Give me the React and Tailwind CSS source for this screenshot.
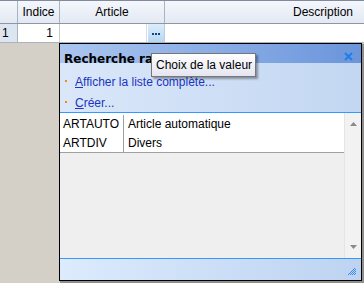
import React from "react";

export default function App() {
  return (
    <div className="relative w-[364px] h-[283px] overflow-hidden bg-[#d4d0c8] font-['Liberation_Sans',Arial,sans-serif] text-[12px] text-black leading-none">
      {/* Header row */}
      <div className="flex h-[24px] border-t border-b border-t-[#7f8a9a] border-b-[#8e96a3] bg-gradient-to-b from-[#f4f7fc] to-[#e3e9f3]">
        <div className="w-[18px] shrink-0 border-r border-[#a9b3c1]" />
        <div className="w-[42px] shrink-0 border-r border-[#a9b3c1] flex items-center justify-center">Indice</div>
        <div className="w-[105px] shrink-0 border-r border-[#a9b3c1] flex items-center justify-center">Article</div>
        <div className="flex-1 flex items-center justify-end pr-[11px]">Description</div>
      </div>
      {/* Data row */}
      <div className="flex h-[19px] border-b border-[#a9b3c1]">
        <div className="w-[18px] shrink-0 border-r border-[#a9b3c1] bg-[#dde5f1] flex items-center pl-[2px]">1</div>
        <div className="w-[42px] shrink-0 border-r border-[#c6ccd5] bg-white flex items-center justify-end pr-[6px]">1</div>
        <div className="w-[105px] shrink-0 border-r border-[#c6ccd5] bg-white flex justify-end items-stretch">
          <div className="w-[1px] bg-[#d6dce4] mr-[1px]" />
          <div className="w-[16px] bg-gradient-to-b from-[#dcedfb] to-[#b5d8f4] flex items-center justify-center pt-[2px]">
            <div className="flex gap-[1px]">
              <div className="w-[2px] h-[2px] bg-[#1f3f7a]" />
              <div className="w-[2px] h-[2px] bg-[#1f3f7a]" />
              <div className="w-[2px] h-[2px] bg-[#1f3f7a]" />
            </div>
          </div>
        </div>
        <div className="flex-1 bg-white" />
      </div>

      {/* Popup */}
      <div className="absolute left-[59px] top-[43px] w-[303px] h-[238px] border border-black flex flex-col bg-[#f0f0f0] shadow-[2px_2px_0_1px_rgba(90,90,90,0.55)]">
        <div className="h-[19px] shrink-0 bg-gradient-to-r from-[#abc6ef] to-[#6b95db] flex items-start pl-[4px] pr-[8px] justify-between">
          <span className="font-bold text-[12px] font-['DejaVu_Sans',sans-serif] mt-[9px]">Recherche rapide</span>
          <svg width="9" height="9" viewBox="0 0 9 9" className="mt-[8px]">
            <path d="M1 1 L8 8 M8 1 L1 8" stroke="#1f7ee9" strokeWidth="1.8" />
          </svg>
        </div>
        <div className="relative h-[50px] shrink-0 border-b border-[#3399ff] bg-gradient-to-r from-[#dae7f9] to-[#c3d7f2] flex flex-col pt-[13px] pl-[5px] gap-[9px]">
          <div className="flex items-center">
            <div className="w-[2px] h-[2px] bg-[#f08a1c] mr-[8px] -mt-[3px]" />
            <span className="text-[#1a34c4]"><span className="underline">A</span>fficher la liste complète...</span>
          </div>
          <div className="flex items-center">
            <div className="w-[2px] h-[2px] bg-[#f08a1c] mr-[8px] -mt-[3px]" />
            <span className="text-[#1a34c4]"><span className="underline">C</span>réer...</span>
          </div>
        </div>
        <div className="h-[145px] shrink-0 flex">
          <div className="flex-1 flex flex-col">
            <div className="bg-white border-b border-[#a0a0a0] pt-[2px]">
              <div className="flex h-[18px]">
                <div className="w-[64px] border-r border-[#a0a0a0] flex items-center pl-[3px]">ARTAUTO</div>
                <div className="flex-1 flex items-center pl-[4px]">Article automatique</div>
              </div>
              <div className="flex h-[19px]">
                <div className="w-[64px] border-r border-[#a0a0a0] flex items-center pl-[3px]">ARTDIV</div>
                <div className="flex-1 flex items-center pl-[4px]">Divers</div>
              </div>
            </div>
            <div className="flex-1 bg-[#efefef]" />
          </div>
          <div className="w-[17px] shrink-0 bg-[#f2f2f2] border-l border-[#e4e4e4] flex flex-col justify-between items-center py-[9px]">
            <svg width="7" height="4" viewBox="0 0 7 4"><path d="M0 4 L3.5 0 L7 4 Z" fill="#8a8a8a" /></svg>
            <svg width="7" height="4" viewBox="0 0 7 4"><path d="M0 0 L7 0 L3.5 4 Z" fill="#8a8a8a" /></svg>
          </div>
        </div>
        <div className="flex-1 border-t border-[#3399ff] bg-gradient-to-r from-[#dcebfd] to-[#bdd3f1] flex items-end justify-end pr-[5px] pb-[4px]">
          <svg width="9" height="9" viewBox="0 0 9 9">
            <g fill="#3b8de8">
              <rect x="7" y="1" width="1" height="1" />
              <rect x="6" y="2" width="1" height="1" /><rect x="8" y="2" width="1" height="1" />
              <rect x="5" y="3" width="1" height="1" /><rect x="7" y="3" width="1" height="1" />
              <rect x="4" y="4" width="1" height="1" /><rect x="6" y="4" width="1" height="1" /><rect x="8" y="4" width="1" height="1" />
              <rect x="3" y="5" width="1" height="1" /><rect x="5" y="5" width="1" height="1" /><rect x="7" y="5" width="1" height="1" />
              <rect x="2" y="6" width="1" height="1" /><rect x="4" y="6" width="1" height="1" /><rect x="6" y="6" width="1" height="1" /><rect x="8" y="6" width="1" height="1" />
              <rect x="1" y="7" width="1" height="1" /><rect x="3" y="7" width="1" height="1" /><rect x="5" y="7" width="1" height="1" /><rect x="7" y="7" width="1" height="1" />
            </g>
          </svg>
        </div>
      </div>

      {/* Tooltip */}
      <div className="absolute left-[151px] top-[53px] w-[105px] h-[24px] border border-[#767676] bg-gradient-to-b from-white to-[#e4e5f0] flex items-center pl-[4px] shadow-[2px_2px_2px_rgba(0,0,0,0.35)]">
        Choix de la valeur
      </div>
    </div>
  );
}
